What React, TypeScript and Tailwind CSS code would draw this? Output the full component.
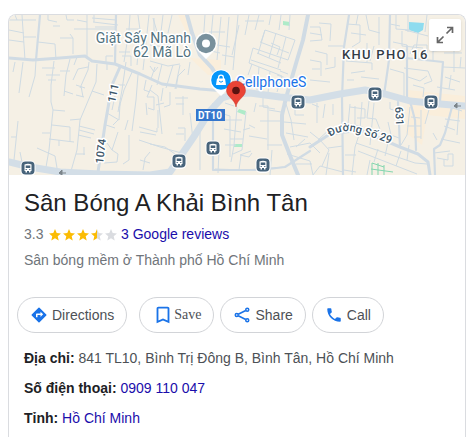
import type { ReactNode } from "react";

const minorRoads = [
  // north-west blocks
  "M9 20H36 M9 30L24 33 M9 40L24 42 M22 15L25 60 M17 20L15 15 M24 37H36 M38 42L55 44L56 60 M60 38H73V54 M70 34L73 38 M60 26H53 M48 15V20L57 22 M66 15L67 20H74 M77 20L87 22 M87 15V58 M74 29H115 M92 18L116 20 M93 22L118 25 M95 27H117 M94 22V15 M130 15L129 30L124 62 M138 15L140 30L137 65 M149 15L143 70 M153 18L158 35 M126 29H139 M119 52H130 M107 62V70 M113 56H106V63 M122 56H131V66 M150 66L154 72L158 67",
  // west blocks
  "M15 62L13 72 M23 62L19 93 M36 60L35 76L29 97 M54 61L51 85V102L53 110L49 150L46 167 M42 68H55 M46 75H60 M48 80H56 M70 59L66 75L64 96 M77 57L74 65 M60 71H70 M89 62L88 70L80 88 M73 80L78 69L88 67 M76 85L85 88 M81 86L83 97 M64 91L73 94 M76 95L84 97 M97 64L96 82L80 120L77 150L71 171 M92 91L104 95 M53 110L65 111 M70 120L81 119 M52 125L70 127V141 M42 133H50 M49 139L74 142 M59 140V146 M79 126L95 130 M79 130L94 134 M78 135L91 138 M18 121L14 160 M11 137H16 M20 152L22 162 M37 148L55 156L57 168 M76 154H85 M84 147V155",
  "M126 62L122 90L118 112 M133 70L124 90L119 108 M138 75L136 100L132 131 M118 85H125 M115 96L112 110 M107 113L119 120L120 104 M106 125L115 128 M118 132L112 150L118 154L117 162L104 163 M129 135V160L123 164 M107 143L112 150 M118 120L113 125 M128 120L125 130 M146 80L144 90L150 92 M152 85L147 97H154V110L148 108 M146 103L147 115 M139 127L157 132V128 M140 132L156 135 M158 128V110 M150 152L145 158L143 170 M140 160L150 163 M139 140L160 147L185 154",
  // central blocks
  "M150 45L165 47 M163 15L160 40 M172 15L168 33 M154 18V44 M150 61L168 66L180 64 M155 67L151 79 M162 64L157 85 M173 65L166 88 M180 65L175 89 M185 69L178 76L176 89 M190 62L188 75 M150 90L158 96L162 134 M163 88L161 101 M170 92V105L164 107 M156 105L164 103 M183 96V115 M175 98H188 M176 104H184 M178 128H185V141 M176 134H184 M150 144L165 147L175 154 M190 113L193 140 M200 110V170",
  "M205 15L203 45 M213 15L210 48 M221 17L217 60 M229 17L225 65 M238 15L233 70 M199 42H211 M202 49L220 53 M209 32H225 M217 45L230 47 M222 55L234 57 M239 25L232 55 M249 15L245 35 M259 15L255 30 M271 15L269 25 M281 15L279 30 M290 15L289 30 M245 21H264 M261 42L265 30L295 40L288 60L253 48L249 63L282 76L277 92 M265 30L258 54 M276 33L269 58 M286 37L278 68 M260 42L289 53 M257 53L281 63 M251 60L281 70 M271 43L280 47L277 55 M252 64L248 75 M259 67L257 90 M270 71L268 93 M277 75L286 78 M280 71L288 74",
  "M225 103L234 106 M217 112L230 116V157 M225 120H242 M224 129L241 132 M237 107L234 145L231 162 M246 112L242 150L233 154 M230 139H243 M225 145H236 M243 130L250 128 M256 103L254 112 M263 98V107L275 109 M259 106H268V150 M269 110L281 112 M249 125L255 128 M260 121H280 M249 136L267 139 M267 145H282 M251 151L240 155L249 157L252 153 M215 169L245 170L285 167L303 155 M219 150L218 173 M241 155L239 170 M272 150L270 175 M286 104L291 120L294 140 M295 100V115H304 M284 122L306 124 M286 133L308 137 M290 147L310 143L320 153 M296 147L305 139 M287 154L310 161L313 175 M296 164H312",
  // north-east blocks
  "M310 27H320L322 40L310 41 M310 33L322 35 M319 23L331 24L330 41 M310 60L321 62V76 M312 69H320 M310 80L330 82 M315 51L327 54V65 M328 46H343 M325 69L335 67V57 M347 24L360 25V42L352 47 M358 15L356 25 M366 15L369 30L380 33 M379 17V45 M351 33L366 35 M346 61L372 63V70 M351 73L365 71 M361 77L379 79 M367 43V62 M374 46L370 61 M347 80H354 M345 54L358 56 M390 24L400 26 M396 15V29L410 30 M408 15V32 M402 31V46L423 48 M393 42L407 45 M390 69L404 73V98 M405 30L428 36 M427 15L425 32 M418 34L416 51 M410 54L414 45H427V60 M404 68L428 71L432 81L424 84 M408 77L420 81L427 76 M413 85L424 88L423 97 M443 67L465 68 M433 60V51L445 50 M454 50V72 M444 53H462 M461 57L460 68 M445 77L460 82 M437 87L455 90 M451 75L449 89",
  // south-east blocks
  "M312 104L319 107 M317 103V123 M325 104L323 118 M333 104V115 M350 104L348 125 M355 106V130 M350 107L365 109V118H357 M362 102L360 130 M369 101L367 118L376 119L381 132 M374 103L370 145 M346 123L363 127 M310 132L320 140L329 150L322 166 M328 148L343 146 M318 140L331 128 M329 153L326 175 M313 175L320 166L343 172 M345 155H356 M360 132L355 147L352 175 M356 143L415 163L427 164 M358 151L417 174 M378 149L374 162 M389 138L385 156 M401 151L396 166 M409 145L407 160 M344 170L356 172 M370 160L367 175 M390 102V109L397 111 M410 107L407 135L401 145 M388 122L391 135L399 138 M411 117L420 118 M407 126H421 M414 137H421 M421 110V139 M430 106L425 124 M449 107L462 111 M445 119L460 121 M444 126L455 130 M441 139L460 143 M459 108L457 135 M433 133L437 140 M437 158L448 160V154H453V166H444V159 M434 153L450 151",
];

const mediumRoads =
  "M40 15L36 60 M116 15L115 63 M349 15L344 47L342 98L343 175 M390 15L389 60L384 95 M407 46V98 M406 58L443 62L440 101 M398 102L400 147 M410 101L415 120L416 150 M452 107L445 133L440 145L434 149L435 175 M213 104L213 170L260 170L285 167L310 151";

const busStops = [
  [28, 168],
  [179, 161],
  [213, 148],
  [263, 165],
  [298, 102],
  [375, 94],
  [431, 102],
];

function BusStop({ x, y }: { x: number; y: number }) {
  return (
    <g transform={`translate(${x} ${y})`}>
      <rect x="-7.5" y="-7.5" width="15" height="15.5" rx="5" fill="#fff" />
      <rect x="-6.5" y="-6.5" width="13" height="13" rx="4" fill="#48647b" />
      <path d="M-3.5 -3.5Q0 -5 3.5 -3.5V3H2.5V4.4H1V3H-1V4.4H-2.5V3H-3.5Z" fill="#fff" />
      <path d="M-2.3 -2.6H2.3V0H-2.3Z M-2.4 1H-1.2V2H-2.4Z M1.2 1H2.4V2H1.2Z" fill="#48647b" />
    </g>
  );
}

function MapView() {
  return (
    <svg
      viewBox="9 15 456 160"
      preserveAspectRatio="xMidYMid slice"
      className="block h-40 w-full font-['Roboto',sans-serif]"
      role="img"
      aria-label="Map"
    >
      <rect x="9" y="15" width="456" height="160" fill="#f5f0e5" />
      <path d="M178 15H187L197 43L190 40Z M190 58L221 60V75H208Z M408 90L465 96V119L427 115L422 145L406 133Z" fill="#faeedb" />
      <path d="M409 22L424 23L423 30L418 33L409 30Z" fill="#8fdcef" />
      <path d="M283 21L290 22V26L283 25Z M239 109L246 111L245 115L237 112Z M234 144H242V147H234Z" fill="#aeebc9" />
      <g fill="none" stroke="#cfdbe3" strokeWidth="1" strokeLinejoin="round">
        {minorRoads.map((d) => (
          <path key={d} d={d} />
        ))}
      </g>
      <g fill="none" stroke="#d0dbe4" strokeLinecap="round" strokeLinejoin="round">
        <path d={mediumRoads} strokeWidth="2.2" />
        <path d="M120 67L112 85L105 125L98 172" strokeWidth="3" />
        <path d="M9 58L33 60L60 58L85 56L92 61L115 64L140 74L162 84L200 89L225 91" strokeWidth="3" />
        <path d="M310 147L330 134L360 130L400 147L418 154L428 162L430 175" strokeWidth="3" />
        <path d="M308 15L303 40L297 60L286 98L282 115V135L291 158L298 175" strokeWidth="4" />
        <path d="M187 15L192 33L200 55L212 68L225 90" strokeWidth="4" />
        <path d="M9 162L30 167L60 172L100 174L150 175L170 172L182 154L195 135L210 111L222 98L235 94L250 93L280 97L310 100L340 94L365 90L385 94L410 101L440 104L465 106" stroke="#d3dee7" strokeWidth="7" />
      </g>
      <path d="M372 163V175 M378 163V175 M384 165V175 M372 163L384 167 M371 169L393 172" fill="none" stroke="#83d6af" strokeWidth="1" />
      <path d="M66 173H59L62 170V175L59 173 M461 106H454L457 103V108L454 106" fill="#7c858b" stroke="#7c858b" strokeWidth="1" />
      <g className="[paint-order:stroke] [stroke-linejoin:round]" stroke="#fff" strokeWidth="3">
        <g className="text-[14px]" fill="#527280">
          <text x="191" y="43" textAnchor="end">Giặt Sấy Nhanh</text>
          <text x="191" y="57" textAnchor="end">62 Mã Lò</text>
          <text x="236" y="87" fill="#1a73e8">CellphoneS</text>
        </g>
        <text x="342" y="59" className="text-[13px] font-medium tracking-widest" fill="#333b45">KHU PHO 16</text>
        <g className="text-[11px] font-medium" fill="#3c5568">
          <text transform="translate(115 103) rotate(-78)">111</text>
          <text transform="translate(103 164) rotate(-83)">1074</text>
          <text transform="translate(395 107) rotate(86)">631</text>
          <path id="street29" d="M330 137Q341 129 354 132Q370 136 396 146" fill="none" stroke="none" />
          <text>
            <textPath href="#street29">Đường Số 29</textPath>
          </text>
        </g>
      </g>
      {busStops.map(([x, y]) => (
        <BusStop key={x} x={x} y={y} />
      ))}
      <rect x="196" y="109" width="29" height="12" fill="#3576cc" />
      <text x="210" y="119" textAnchor="middle" className="text-[10px] font-bold" fill="#fff">DT10</text>
      <path d="M206 59L198 51A11 11 0 1 1 214 51Z" fill="#fff" />
      <circle cx="206" cy="43.5" r="9.7" fill="#78909c" />
      <circle cx="206" cy="43.5" r="4" fill="#fff" />
      <path d="M221 96L213 88A11 11 0 1 1 229 88Z" fill="#fff" />
      <circle cx="221" cy="80" r="9.8" fill="#0696fa" />
      <path d="M217 78.5H225L226 85H216Z" fill="#fff" />
      <path d="M218.6 79V77.5A2.4 2.4 0 0 1 223.4 77.5V79" fill="none" stroke="#fff" strokeWidth="1.3" />
      <path d="M219 81Q221 83.5 223 81" fill="none" stroke="#0696fa" strokeWidth="1" />
      <path d="M236 107C235 99 226.500 97 226.500 90.500A9.500 9.500 0 0 1 245.500 90.500C245.500 97 237 99 236 107Z" fill="#ea4335" stroke="#c5372c" strokeWidth="0.5" />
      <circle cx="236" cy="90.500" r="3.8" fill="#5b1310" />
    </svg>
  );
}

const starPath = "M6 0L7.700 4L12 4.400L8.700 7.200L9.700 11.500L6 9.200L2.300 11.500L3.300 7.200L0 4.400L4.300 4Z";

function Stars() {
  return (
    <svg width="68" height="12" viewBox="0 0 68 12" role="img" aria-label="Rated 3.3 out of 5">
      <defs>
        <linearGradient id="half">
          <stop offset="50%" stopColor="#fbbc04" />
          <stop offset="50%" stopColor="#dadce0" />
        </linearGradient>
      </defs>
      {["#fbbc04", "#fbbc04", "#fbbc04", "url(#half)", "#dadce0"].map((fill, i) => (
        <path key={i} d={starPath} fill={fill} transform={`translate(${i * 14} 0)`} />
      ))}
    </svg>
  );
}

function Pill({ children, className = "" }: { children: ReactNode; className?: string }) {
  return (
    <button
      type="button"
      className={`flex h-9 items-center rounded-full border border-[#d2d4d8] px-3 text-[14px] text-[#4d5156] ${className}`}
    >
      {children}
    </button>
  );
}

export default function App() {
  return (
    <main className="bg-white pt-3.5 pr-[9px] pl-2 font-['Liberation_Sans',Arial,sans-serif] text-[14px] leading-5 text-[#4d5156]">
      <article className="min-h-[423px] overflow-hidden rounded-t-lg border border-b-0 border-[#dadce0]">
        <div className="relative">
          <MapView />
          <button
            type="button"
            aria-label="Expand map"
            className="absolute top-1 right-1 flex size-8 items-center justify-center rounded-xs bg-white shadow-sm"
          >
            <svg width="18" height="18" viewBox="0 0 18 18" fill="none" stroke="#666" strokeWidth="1.700">
              <path d="M11 1.500H16.500V7 M16.500 1.500L10.500 7.500 M7 16.500H1.500V11 M1.500 16.500L7.500 10.500" />
            </svg>
          </button>
        </div>

        <header className="px-[15px] pt-3">
          <h1 className="text-[24px] leading-8 text-[#202124]">Sân Bóng A Khải Bình Tân</h1>
          <div className="mt-1 flex h-6 items-center leading-[22px]">
            <span className="mr-[5px] w-5 pb-0.5 text-[#70757a]">3.3</span>
            <Stars />
            <a href="#reviews" className="ml-1 pb-0.5 text-[#1a0dab]">3 Google reviews</a>
          </div>
          <p className="h-6 leading-[26px] text-[#70757a]">Sân bóng mềm ở Thành phố Hồ Chí Minh</p>
        </header>

        <div className="mt-[26px] flex gap-1.5 px-2">
          <Pill className="mr-1.5 gap-1">
            <svg width="18" height="18" viewBox="0 0 24 24" fill="#1a73e8" aria-hidden="true">
              <path d="M21.710 11.290l-9-9a1 1 0 0 0-1.410 0l-9 9a1 1 0 0 0 0 1.410l9 9c.39.39 1.020.39 1.410 0l9-9a1 1 0 0 0 0-1.410zM14 14.500V12h-4v3H8v-4c0-.55.45-1 1-1h5V7.500l3.500 3.500-3.500 3.500z" />
            </svg>
            Directions
          </Pill>
          <Pill className="font-['Liberation_Serif',serif]">
            <svg width="22" height="22" viewBox="0 0 24 24" fill="#1a73e8" aria-hidden="true">
              <path d="M17 3H7c-1.100 0-2 .9-2 2v16l7-3 7 3V5c0-1.100-.9-2-2-2zm0 15l-5-2.180L7 18V5h10v13z" />
            </svg>
            Save
          </Pill>
          <Pill className="gap-1">
            <svg width="18" height="18" viewBox="0 0 24 24" fill="none" stroke="#1a73e8" strokeWidth="2" aria-hidden="true">
              <path d="M7 11L17 6 M7 13L17 18" />
              <circle cx="5" cy="12" r="2" />
              <circle cx="19" cy="5" r="2" />
              <circle cx="19" cy="19" r="2" />
            </svg>
            Share
          </Pill>
          <Pill className="gap-1">
            <svg width="18" height="18" viewBox="0 0 24 24" fill="#1a73e8" aria-hidden="true">
              <path d="M6.620 10.790c1.440 2.830 3.760 5.140 6.590 6.590l2.200-2.200c.27-.27.67-.36 1.020-.24 1.120.37 2.330.57 3.570.57.55 0 1 .45 1 1V20c0 .55-.45 1-1 1C10.610 21 3 13.390 3 4c0-.55.45-1 1-1h3.500c.55 0 1 .45 1 1 0 1.250.2 2.450.57 3.570.11.35.03.74-.25 1.020l-2.200 2.200z" />
            </svg>
            Call
          </Pill>
        </div>

        <div className="mt-[15px] flex flex-col gap-2.5 px-[15px]">
          <p><b className="text-[#202124]">Địa chỉ:</b> 841 TL10, Bình Trị Đông B, Bình Tân, Hồ Chí Minh</p>
          <p><b className="text-[#202124]">Số điện thoại:</b> <a href="tel:0909110047" className="text-[#1a0dab]">0909 110 047</a></p>
          <p><b className="text-[#202124]">Tỉnh:</b> <a href="#province" className="text-[#1a0dab]">Hồ Chí Minh</a></p>
        </div>
      </article>
    </main>
  );
}
